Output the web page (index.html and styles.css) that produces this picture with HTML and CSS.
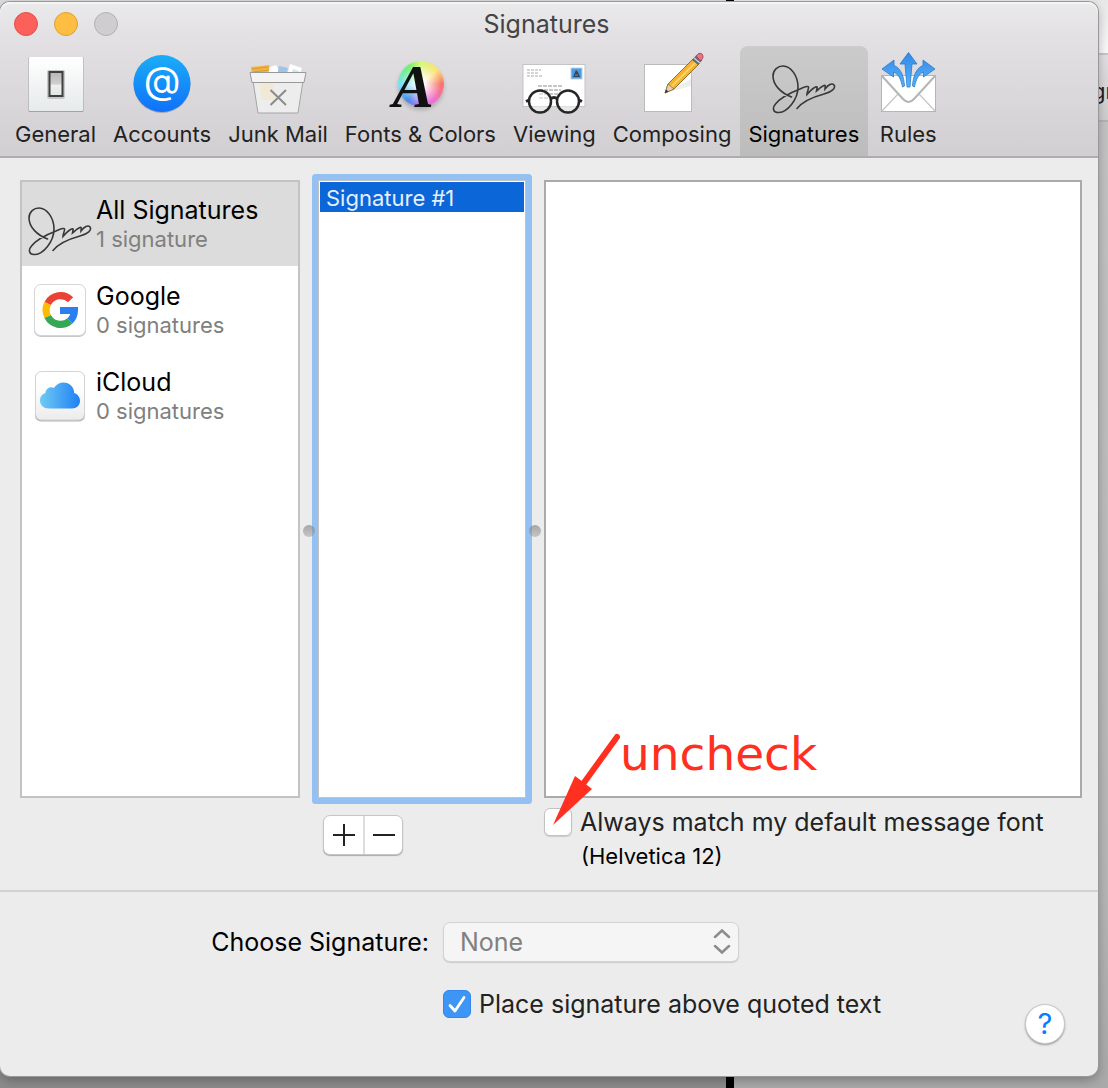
FILE: index.html
```html
<!DOCTYPE html>
<html lang="en">
<head>
    <meta charset="UTF-8">
    <meta name="viewport" content="width=device-width, initial-scale=1.0">
    <title>Signatures</title>
    <link rel="stylesheet" href="styles.css">
</head>
<body>
    <!-- windows behind the preferences window -->
    <div class="desktop" aria-hidden="true">
        <div class="back-window back-left"></div>
        <div class="back-window back-right">
            <div class="back-title"></div>
            <div class="back-toolbar">gn</div>
        </div>
    </div>

    <svg class="defs" aria-hidden="true">
        <symbol id="scribble" viewBox="0 0 64 64">
            <path d="M19.500 47C9 43 1 35 1 26C1 19.500 6 16 11 16C19 16 26 26 26 37C26 50 15 62 7 62.500C1 63 0 58 3.500 54C9 47 19 42.500 28 39C34 36.300 37 35.500 36.500 38C36.200 40 35 42 35 44.500C38 41 41 38 43.500 37C46 36 45 38 44.500 41C48 38 50 36 52 35.500C54 35 53 37 53 39C56 35 60 32.500 62 35C64 38 60 42 52 44C41 47 31 51 25 58.500"/>
        </symbol>
    </svg>

    <main class="window">
        <header class="titlebar">
            <div class="title-row">
                <div class="lights">
                    <button class="light close" aria-label="Close"></button>
                    <button class="light minimize" aria-label="Minimize"></button>
                    <button class="light zoom" aria-label="Zoom"></button>
                </div>
                <h1>Signatures</h1>
            </div>
            <nav class="toolbar">
                <button class="tool">
                    <svg class="icon" viewBox="0 0 64 64">
                        <defs>
                            <linearGradient id="plate" x2="0" y2="1"><stop stop-color="#fff"/><stop offset="1" stop-color="#e6eaea"/></linearGradient>
                            <linearGradient id="switch" x2="0" y2="1"><stop stop-color="#b5b5b5"/><stop offset=".5" stop-color="#d0d0d0"/><stop offset=".55" stop-color="#eee"/><stop offset="1" stop-color="#e0e6e6"/></linearGradient>
                        </defs>
                        <rect x="4.500" y="7" width="55" height="55" rx="1" fill="#a3a3a3"/>
                        <rect x="5" y="7" width="54" height="54" rx="1" fill="url(#plate)"/>
                        <rect x="23" y="20" width="18" height="29" rx="2" fill="#c6c9c9"/>
                        <rect x="25.500" y="22" width="13" height="24" fill="url(#switch)" stroke="#3e3e3e" stroke-width="2"/>
                    </svg>
                    <span>General</span>
                </button>
                <button class="tool">
                    <svg class="icon" viewBox="0 0 64 64">
                        <defs><linearGradient id="blue" x2="0" y2="1"><stop stop-color="#1badf8"/><stop offset="1" stop-color="#0f71fa"/></linearGradient></defs>
                        <circle cx="32" cy="34.500" r="28.500" fill="#9fa9b5"/>
                        <circle cx="32" cy="33.500" r="28.500" fill="url(#blue)"/>
                        <text class="at" x="32" y="44" text-anchor="middle">@</text>
                    </svg>
                    <span>Accounts</span>
                </button>
                <button class="tool">
                    <svg class="icon" viewBox="0 0 64 64">
                        <path d="M5 17L23 15L25 27H6Z" fill="#f2b544"/>
                        <path d="M6 19L22 17M7 22L23 20" stroke="#d99a2d" stroke-width="1"/>
                        <path d="M24 17L30 15L35 24H22Z" fill="#fff"/>
                        <path d="M33 16L42 18L40 26H31Z" fill="#9cc5ea"/>
                        <path d="M44 14L56 18L53 26H41Z" fill="#fff"/>
                        <path d="M47 19L53 21L52 25H45Z" fill="#cfe6f2"/>
                        <path d="M7 31L12 63H52L57 31Z" fill="#ededed" stroke="#a5a5a5"/>
                        <path d="M13 32H27L29 50H16Z" fill="#f4e6cc" opacity=".7"/>
                        <path d="M4 22.500H60L58 32.500H6Z" fill="#f3f3f3" stroke="#999"/>
                        <path d="M24.500 40L40 55M40 40L24.500 55" stroke="#8b8b8b" stroke-width="2"/>
                    </svg>
                    <span>Junk Mail</span>
                </button>
                <button class="tool">
                    <span class="icon fonts-icon">
                        <span class="wheel"></span>
                        <span class="serif-a">A</span>
                    </span>
                    <span>Fonts &amp; Colors</span>
                </button>
                <button class="tool">
                    <svg class="icon" viewBox="0 0 64 64">
                        <rect x="1" y="14.500" width="62" height="42" fill="#fff" stroke="#c4c4c4"/>
                        <path d="M5 20H19M5 23H16M5 26H20" stroke="#aaa" stroke-dasharray="3 1"/>
                        <path d="M16 36H41M17 40H39M17 44H36M17 48H26" stroke="#b5b5b5" stroke-width="1.500" stroke-dasharray="4 1"/>
                        <rect x="49" y="18" width="11" height="11" fill="#4a9be8" stroke="#bcd3e8"/>
                        <path d="M51 27L54 20L56 22L58 27Z" fill="#34495b"/>
                        <path d="M53 25H56" stroke="#b77c45"/>
                        <g fill="#fff" fill-opacity=".45" stroke="#262626" stroke-width="2.500">
                            <circle cx="18" cy="51.500" r="11"/>
                            <circle cx="46" cy="51.500" r="11"/>
                        </g>
                        <path d="M28.500 49Q32 46 35.500 49M7 50L4 51.500M57 50L60 51.500" fill="none" stroke="#262626" stroke-width="3"/>
                    </svg>
                    <span>Viewing</span>
                </button>
                <button class="tool">
                    <svg class="icon" viewBox="0 0 64 64">
                        <rect x="4.500" y="14.500" width="47" height="47" fill="#fff" stroke="#bcbcbc"/>
                        <path d="M26 43L51 29V36L32 41Z" fill="#eee"/>
                        <path d="M25 43L28 34L54 8L60 13L34 39Z" fill="#f5b32f" stroke="#94712f"/>
                        <path d="M31 37L57 11" stroke="#ffd260" stroke-width="2"/>
                        <path d="M25 43L28 34L34 39Z" fill="#e9cfa5" stroke="#8d7550" stroke-width=".8"/>
                        <path d="M25 43L26 39.500L28.500 41.500Z" fill="#333"/>
                        <path d="M52 10L56 5.500L62 10.500L58 15Z" fill="#606b73"/>
                        <path d="M54 8L60 13" stroke="#c3d5dc" stroke-width="1.500"/>
                        <path d="M56 6L58 4Q60 2 62.500 4.500Q64 7 62 9.500L61 11Z" fill="#ee7185" stroke="#8f4650" stroke-width=".8"/>
                    </svg>
                    <span>Composing</span>
                </button>
                <button class="tool selected" aria-current="page">
                    <svg class="icon scribble"><use href="#scribble"/></svg>
                    <span>Signatures</span>
                </button>
                <button class="tool">
                    <svg class="icon" viewBox="0 0 64 64">
                        <defs><linearGradient id="arrows" gradientUnits="userSpaceOnUse" x1="0" y1="2" x2="0" y2="37"><stop stop-color="#3187e9"/><stop offset="1" stop-color="#58b4fb"/></linearGradient></defs>
                        <rect x="5.500" y="25.500" width="54" height="36" fill="#fff" stroke="#b5b5b5"/>
                        <path d="M6 61L22 44M59 61L43 44" stroke="#c5c5c5" stroke-width="1.200"/>
                        <path d="M6 26L27 49Q32.500 55 38 49L59 26" fill="#fff" stroke="#b5b5b5" stroke-width="2"/>
                        <g fill="url(#arrows)" stroke="#2e7ac6" stroke-width=".8">
                            <path d="M32.500 2.500L41 14H36L34 37H31L29 14H24Z"/>
                            <path d="M6 19L18 10V15.500C25 18 28 27 28.500 36L26.500 37C25 29 22 23.500 17.500 22V27Z"/>
                            <path d="M59 19L47 10V15.500C40 18 37 27 36.500 36L38.500 37C40 29 43 23.500 47.500 22V27Z"/>
                        </g>
                    </svg>
                    <span>Rules</span>
                </button>
            </nav>
        </header>

        <section class="panes">
            <ul class="pane accounts">
                <li>
                    <button class="account selected">
                        <svg class="account-icon scribble"><use href="#scribble"/></svg>
                        <span class="account-text"><span class="name">All Signatures</span><span class="count">1 signature</span></span>
                    </button>
                </li>
                <li>
                    <button class="account">
                        <svg class="account-icon" viewBox="0 0 64 64">
                            <rect x="6" y="7" width="52" height="52" rx="7" fill="#c9c9c9"/>
                            <rect x="6.500" y="6.500" width="51" height="51" rx="6.500" fill="#fff" stroke="#d6d6d6"/>
                            <g fill="none" stroke-width="7.200">
                                <path d="M42.600 21.800A14.300 14.300 0 0 0 19.700 25.500" stroke="#ea4335"/>
                                <path d="M19.700 25.500A14.300 14.300 0 0 0 19.700 38.500" stroke="#fbbc05"/>
                                <path d="M19.700 38.500A14.300 14.300 0 0 0 41.800 43" stroke="#34a853"/>
                                <path d="M41.800 43A14.300 14.300 0 0 0 46.400 32.500H32" stroke="#2c7ff0"/>
                            </g>
                        </svg>
                        <span class="account-text"><span class="name">Google</span><span class="count">0 signatures</span></span>
                    </button>
                </li>
                <li>
                    <button class="account">
                        <svg class="account-icon" viewBox="0 0 64 64">
                            <defs>
                                <linearGradient id="cloud"><stop stop-color="#6fcbf5"/><stop offset="1" stop-color="#2080f3"/></linearGradient>
                                <linearGradient id="tile" x2="0" y2="1"><stop offset=".3" stop-color="#fff"/><stop offset="1" stop-color="#ececec"/></linearGradient>
                            </defs>
                            <rect x="7" y="8" width="50" height="49.500" rx="6" fill="#b5b5b5"/>
                            <rect x="7.500" y="7.500" width="49" height="48.500" rx="6" fill="url(#tile)" stroke="#d3d3d3"/>
                            <path d="M21 44.500C15.500 44.500 12 41 12 36.500C12 32.500 14.500 29.800 17.500 29C17.500 25 22 22 25.800 24C28 20.500 31.500 18.500 35.500 18.500C41.500 18.500 46 23 46.200 29C49.500 30 52 33 52 37C52 41.500 48.500 44.500 44 44.500Z" fill="url(#cloud)"/>
                        </svg>
                        <span class="account-text"><span class="name">iCloud</span><span class="count">0 signatures</span></span>
                    </button>
                </li>
            </ul>
            <div class="splitter first"><span class="grip"></span></div>
            <ul class="pane signatures">
                <li><button class="signature">Signature #1</button></li>
            </ul>
            <div class="splitter second"><span class="grip"></span></div>
            <div class="editor">
                <textarea class="pane" aria-label="Signature text"></textarea>
                <div class="note">
                    <svg width="70" height="94" viewBox="0 0 70 94">
                        <path d="M67 6L33 53" stroke="#ff3020" stroke-width="6" stroke-linecap="round"/>
                        <path d="M3 94L25 45L33 51L42 58Z" fill="#ff3020"/>
                    </svg>
                    <span>uncheck</span>
                </div>
            </div>

            <div class="list-buttons">
                <button aria-label="Add signature"><svg width="22" height="22" viewBox="0 0 22 22"><path d="M0 11H22M11 0V22"/></svg></button>
                <button aria-label="Remove signature"><svg width="22" height="22" viewBox="0 0 22 22"><path d="M0 11H22"/></svg></button>
            </div>
            <div class="match-font">
                <label class="check"><input type="checkbox">Always match my default message font</label>
                <small>(Helvetica 12)</small>
            </div>
        </section>

        <footer class="options">
            <form class="choose">
                <label for="choose-signature">Choose Signature:</label>
                <div class="select">
                    <select id="choose-signature" disabled>
                        <option>None</option>
                    </select>
                    <svg width="18" height="26" viewBox="0 0 18 26"><path d="M2 8L9 1.500L16 8M2 17L9 23.500L16 17"/></svg>
                </div>
                <label class="check above"><input type="checkbox" checked>Place signature above quoted text</label>
            </form>
            <button class="help" aria-label="Help">?</button>
        </footer>
    </main>
</body>
</html>
```

FILE: styles.css
```css
* {
    box-sizing: border-box;
}
body {
    margin: 0;
    min-height: 100vh;
    display: flex;
    padding: 2px 10px 12px 0;
    font-family: Inter, "Liberation Sans", sans-serif;
    font-size: 25px;
    color: #222;
    background: #000;
    position: relative;
}
button {
    font: inherit;
    color: inherit;
    padding: 0;
    border: none;
    background: none;
}
h1, ul {
    margin: 0;
    padding: 0;
    font-weight: normal;
    list-style: none;
}
.defs {
    position: absolute;
    width: 0;
    height: 0;
}

/* desktop behind */
.desktop {
    position: absolute;
    inset: 0;
    overflow: hidden;
}
.back-window {
    position: absolute;
    top: 0;
    bottom: 0;
}
.back-left {
    left: 0;
    width: 726px;
    background: linear-gradient(#ddd, #999 90%, #8c8c8c);
}
.back-right {
    left: 734px;
    right: 0;
    background: linear-gradient(#c6c6c6, #b8b8b8 80%, #aaa);
}
.back-title {
    height: 55px;
    background: linear-gradient(#e8e8e8, #fafafa);
    border-bottom: 2px solid #c6c6c6;
}
.back-toolbar {
    height: 67px;
    line-height: 72px;
    font-size: 22px;
    padding-left: 358px;
    background: linear-gradient(#e2e0e2, #d0cfd0);
    border-bottom: 2px solid #b5b5b5;
}

/* window */
.window {
    position: relative;
    flex: 1;
    display: flex;
    flex-direction: column;
    background: #ececec;
    border-radius: 10px;
    box-shadow: 0 0 0 1px #999, 0 4px 12px rgba(0, 0, 0, 0.3);
}
.titlebar {
    background: linear-gradient(#ebeaeb, #e3e1e4 20%, #d1cfd1);
    border-bottom: 2px solid #aeacae;
    border-radius: 10px 10px 0 0;
    box-shadow: inset 0 2px #f4f4f4;
}
.title-row {
    display: grid;
    grid-template-columns: 1fr auto 1fr;
    align-items: center;
    height: 44px;
    padding: 0 19px 0 14px;
}
.title-row h1 {
    font-size: 25px;
    color: #444;
}
.lights {
    display: flex;
    gap: 16px;
}
.light {
    width: 24px;
    height: 24px;
    border: 1px solid;
    border-radius: 50%;
}
.close {
    background: #fc605b;
    border-color: #e2504a;
}
.minimize {
    background: #fdbe41;
    border-color: #e0a035;
}
.zoom {
    background: #cfcdd0;
    border-color: #b3b1b4;
}
.toolbar {
    display: flex;
    padding-left: 7px;
}
.tool {
    display: flex;
    flex-direction: column;
    align-items: center;
    height: 110px;
    padding: 4px 9px 0 8px;
    font-size: 22px;
    line-height: 40px;
    white-space: nowrap;
    border-radius: 8px 8px 0 0;
}
.tool.selected {
    background: linear-gradient(#cbcbcb, #bcbcbc);
    color: #000;
}
.icon {
    width: 64px;
    height: 64px;
    flex: none;
}
.scribble {
    fill: none;
    stroke: #383838;
    stroke-width: 1.6;
    stroke-linecap: round;
}
.at {
    font: 38px Inter, sans-serif;
    fill: #fff;
}
.fonts-icon {
    position: relative;
    padding: 11px 0 0 10px;
}
.wheel {
    display: block;
    width: 46px;
    height: 46px;
    border-radius: 50%;
    background:
        radial-gradient(circle, #fff 3px, rgba(255, 255, 255, 0) 20px),
        conic-gradient(#d8f77a, #fbe277 50deg, #fa7468 90deg, #ef70cc 140deg, #d777ef 175deg, #4a8de8 220deg, #7adffc 265deg, #74ecb5 295deg, #75ef72 325deg, #d8f77a);
    box-shadow: 0 3px 4px rgba(0, 0, 0, 0.2);
}
.serif-a {
    position: absolute;
    left: 4px;
    top: 4px;
    font: italic bold 62px/64px "Liberation Serif", serif;
    color: #111;
}

/* panes */
.panes {
    display: grid;
    grid-template-columns: 280px 18px 208px 18px 1fr;
    grid-template-rows: 1fr 84px;
    flex: 1;
    padding: 22px 16px 8px 20px;
    border-bottom: 2px solid #d2d2d2;
}
.pane {
    background: #fff;
    border: 2px solid #c3c3c3;
}
.accounts {
    grid-area: 1 / 1;
    display: flex;
    flex-direction: column;
    gap: 2px;
}
.account {
    display: flex;
    align-items: center;
    gap: 4px;
    width: 100%;
    height: 84px;
    padding-left: 6px;
    text-align: left;
}
.account.selected {
    background: #dcdcdc;
}
.account-icon {
    width: 64px;
    height: 64px;
    flex: none;
}
.account-text {
    display: flex;
    flex-direction: column;
}
.name {
    font-size: 25px;
    line-height: 30px;
    color: #000;
}
.count {
    font-size: 22px;
    line-height: 28px;
    color: #808080;
}
.splitter {
    display: flex;
    align-items: center;
    justify-content: center;
    z-index: 1;
}
.first {
    grid-area: 1 / 2 / 3;
}
.second {
    grid-area: 1 / 4 / 3;
}
.grip {
    width: 12px;
    height: 12px;
    border-radius: 50%;
    background: linear-gradient(rgba(120, 120, 120, 0.6), rgba(160, 160, 160, 0.5));
}
.signatures {
    grid-area: 1 / 3;
    border-width: 1px;
    padding: 1px;
    box-shadow: 0 0 0 6px #94c0f2;
    border-radius: 1px;
}
.signature {
    display: block;
    width: 100%;
    height: 30px;
    padding-left: 6px;
    font-size: 22px;
    line-height: 32px;
    text-align: left;
    color: #e4efff;
    background: #0b66d8;
}
.editor {
    grid-area: 1 / 5;
    position: relative;
    display: flex;
}
.editor textarea {
    flex: 1;
    resize: none;
    border-color: #aaa;
}
.note {
    position: absolute;
    left: 6px;
    bottom: -27px;
    display: flex;
    align-items: flex-start;
    font: 47px/46px "DejaVu Sans", sans-serif;
    color: #ff3020;
    pointer-events: none;
}
.list-buttons {
    grid-area: 2 / 3;
    display: flex;
    align-self: start;
    justify-self: start;
    margin: 17px 0 0 5px;
    background: #fff;
    border: 1px solid #c6c6c6;
    border-radius: 7px;
    box-shadow: 0 1px 1px #aaa;
}
.list-buttons button {
    display: flex;
    align-items: center;
    justify-content: center;
    width: 39px;
    height: 38px;
}
.list-buttons button + button {
    border-left: 2px solid #ddd;
}
.list-buttons path {
    stroke: #222;
    stroke-width: 2;
}
.match-font {
    grid-area: 2 / 5;
    padding-top: 9px;
}
.match-font small {
    display: block;
    padding-left: 37px;
    font-size: 22px;
    line-height: 38px;
    color: #000;
}
.check {
    display: flex;
    align-items: center;
    gap: 8px;
    line-height: 30px;
    white-space: nowrap;
}
.check input {
    appearance: none;
    flex: none;
    width: 28px;
    height: 28px;
    margin: 0;
    background: #fff;
    border: 1px solid #c2c2c2;
    border-radius: 6px;
    box-shadow: 0 1px 1px #ccc;
}
.check input:checked {
    background: #3d95f5 url("data:image/svg+xml,%3Csvg xmlns='http://www.w3.org/2000/svg' viewBox='0 0 28 28'%3E%3Cpath d='M7 15.500L12 21L21 7.500' fill='none' stroke='white' stroke-width='2.800' stroke-linecap='round' stroke-linejoin='round'/%3E%3C/svg%3E") center / 28px;
    border-color: #3288ec;
    box-shadow: none;
}

/* bottom options */
.options {
    display: flex;
    justify-content: space-between;
    align-items: flex-end;
    padding: 30px 33px 32px 0;
}
.choose {
    display: grid;
    grid-template-columns: 429px 296px;
    column-gap: 14px;
    row-gap: 27px;
    align-items: center;
    padding-bottom: 25px;
}
.choose > label:first-child {
    text-align: right;
    color: #000;
}
.above {
    grid-column: 2;
}
.select {
    position: relative;
}
.select select {
    appearance: none;
    display: block;
    width: 100%;
    height: 40px;
    padding: 0 16px;
    font: inherit;
    color: #808080;
    opacity: 1;
    background: #f5f5f5;
    border: 1px solid #d3d3d3;
    border-radius: 7px;
    box-shadow: 0 1px 1px #ccc;
}
.select svg {
    position: absolute;
    right: 8px;
    top: 7px;
    pointer-events: none;
}
.select path {
    fill: none;
    stroke: #8c8c8c;
    stroke-width: 2.5;
    stroke-linecap: round;
}
.help {
    width: 40px;
    height: 40px;
    font-size: 29px;
    line-height: 38px;
    color: #0a7aff;
    background: #fff;
    border: 1px solid #c8c8c8;
    border-radius: 50%;
    box-shadow: 0 1px 2px #999;
}
```
